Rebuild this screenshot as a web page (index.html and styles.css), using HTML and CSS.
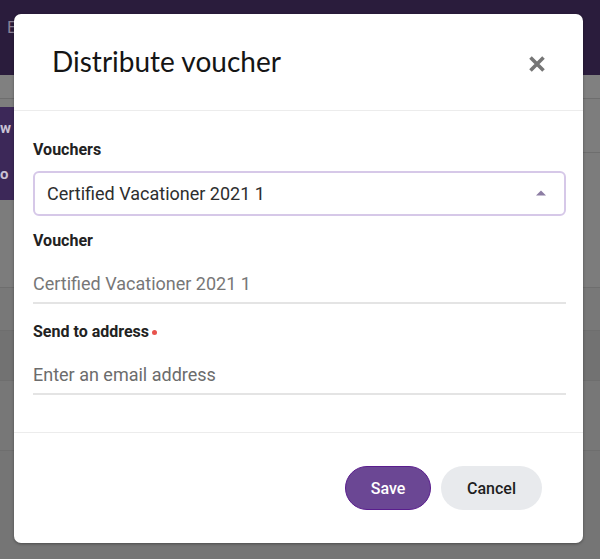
FILE: index.html
```html
<!DOCTYPE html>
<html>
<head>
<meta charset="utf-8">
<link rel="stylesheet" href="styles.css">
</head>
<body>
<div class="page">
  <div class="topbar"><span class="brand">E</span></div>
  <div class="content">
    <div class="row row-a"></div>
    <div class="row row-b">
      <div class="side-card">
        <div class="side-line">w voucher</div>
        <div class="side-line">o</div>
      </div>
    </div>
    <div class="row row-c"></div>
    <div class="row row-d"></div>
    <div class="row row-e"></div>
    <div class="row row-f"></div>
    <div class="row row-g"><span class="bg-text">Certified Vacationer 2021 0</span></div>
  </div>
</div>

<div class="modal">
  <div class="modal-header">
    <h1 class="modal-title">Distribute voucher</h1>
    <button class="close" aria-label="Close">
      <svg width="18" height="18" viewBox="0 0 18 18"><path d="M2.5 2.5 L15.5 15.5 M15.5 2.5 L2.5 15.5" stroke="#767676" stroke-width="3.6" stroke-linecap="butt"/></svg>
    </button>
  </div>
  <div class="modal-body">
    <label class="label">Vouchers</label>
    <div class="select">
      <span>Certified Vacationer 2021 1</span>
      <svg class="caret" width="10" height="6" viewBox="0 0 10 6"><path d="M0 5.5 L5 0.5 L10 5.5 Z" fill="#8c7da3"/></svg>
    </div>
    <label class="label label-gap">Voucher</label>
    <div class="field readonly">Certified Vacationer 2021 1</div>
    <label class="label label-gap2">Send to address<span class="req"></span></label>
    <div class="field placeholder">Enter an email address</div>
  </div>
  <div class="modal-footer">
    <button class="btn btn-save">Save</button>
    <button class="btn btn-cancel">Cancel</button>
  </div>
</div>
</body>
</html>
```

FILE: styles.css
```css
* { box-sizing: border-box; }
html, body { margin: 0; padding: 0; }
body {
  width: 600px;
  height: 559px;
  overflow: hidden;
  position: relative;
  font-family: Roboto, "Liberation Sans", sans-serif;
  background: #777777;
}
.page { width: 600px; height: 559px; display: flex; flex-direction: column; }
.topbar {
  height: 75px;
  background: #2a1c3c;
  display: flex;
  align-items: center;
  padding-left: 7px;
  flex-shrink: 0;
}
.brand { color: #8a8296; font-size: 17px; margin-top: -22px; }
.content { flex: 1; display: flex; flex-direction: column; }
.row { border-bottom: 1px solid #6e6e6e; }
.row-a { height: 24px; background: #808080; }
.row-b { height: 54px; background: #7d7d7d; position: relative; }
.side-card {
  position: absolute;
  left: 0;
  top: 8px;
  width: 14px;
  height: 93px;
  background: #3c2858;
  color: #c9c2d4;
  font-weight: 700;
  font-size: 15px;
  padding-top: 12px;
  display: flex;
  flex-direction: column;
  gap: 28px;
}
.side-line { white-space: nowrap; line-height: 18px; }
.row-c { height: 135px; background: #7c7c7c; }
.row-d { height: 43px; background: #787878; }
.row-e { height: 50px; background: #727272; }
.row-f { height: 70px; background: #777777; }
.row-g { flex: 1; background: #757575; border-bottom: none; position: relative; }
.bg-text {
  position: absolute;
  left: 290px;
  top: 76px;
  color: #3a3a3a;
  font-size: 17px;
}

.modal {
  position: absolute;
  left: 14px;
  top: 14px;
  width: 569px;
  height: 529px;
  background: #ffffff;
  border-radius: 7px;
  display: flex;
  flex-direction: column;
  box-shadow: 0 1px 3px rgba(0,0,0,0.35);
}
.modal-header {
  height: 97px;
  border-bottom: 1px solid #ececec;
  display: flex;
  align-items: center;
  justify-content: space-between;
  padding: 0 37px 0 38px;
  flex-shrink: 0;
}
.modal-title {
  margin: 0;
  font-family: Lato, "Open Sans", sans-serif;
  font-weight: 400;
  font-size: 28px;
  color: #151515;
  letter-spacing: 0;
  margin-top: -2px;
}
.close {
  border: none;
  background: none;
  padding: 0;
  width: 18px;
  height: 18px;
  margin-top: 4px;
  display: flex;
}
.modal-body {
  flex: 1;
  padding: 29px 17px 0 19px;
  display: flex;
  flex-direction: column;
  border-bottom: 1px solid #ececec;
}
.label {
  display: flex;
  align-items: center;
  font-size: 16px;
  font-weight: 700;
  color: #222222;
  line-height: 20px;
  height: 20px;
}
.req {
  width: 5px;
  height: 5px;
  border-radius: 50%;
  background: #e8534d;
  margin-left: 3px;
  margin-top: 1px;
}
.select {
  margin-top: 11px;
  height: 45px;
  border: 2px solid #d6c8e8;
  border-radius: 6px;
  display: flex;
  align-items: center;
  justify-content: space-between;
  padding: 0 18px 0 12px;
  font-size: 18px;
  color: #2e2e2e;
}
.caret { margin-top: -2px; }
.label-gap { margin-top: 15px; }
.label-gap2 { margin-top: 18px; }
.field {
  height: 53px;
  border-bottom: 2px solid #e4e4e4;
  display: flex;
  align-items: center;
  font-size: 18px;
  padding-top: 13px;
}
.readonly { color: #777777; }
.placeholder { color: #6c6c6c; }
.modal-footer {
  height: 110px;
  display: flex;
  justify-content: flex-end;
  align-items: center;
  gap: 10px;
  padding: 0 41px 0 0;
  flex-shrink: 0;
}
.btn {
  height: 44px;
  border-radius: 22px;
  font-family: Roboto, "Liberation Sans", sans-serif;
  font-size: 16px;
  font-weight: 500;
  cursor: pointer;
}
.btn-save {
  width: 86px;
  background: #6b4794;
  color: #ffffff;
  border: 1px solid #5a1d8e;
}
.btn-cancel {
  width: 101px;
  background: #e8eaed;
  color: #1e1e1e;
  border: none;
}
```
